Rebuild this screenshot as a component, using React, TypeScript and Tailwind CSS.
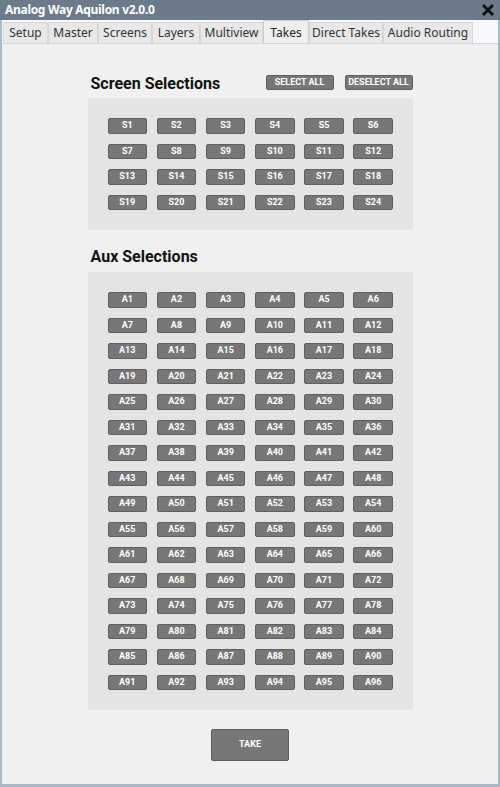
import React from "react";

const tabs = [
  { label: "Setup", w: "w-[45px]" },
  { label: "Master", w: "w-[50px]" },
  { label: "Screens", w: "w-[54px]" },
  { label: "Layers", w: "w-[48px]" },
  { label: "Multiview", w: "w-[63px]" },
  { label: "Takes", w: "w-[46px]", active: true },
  { label: "Direct Takes", w: "w-[74px]" },
  { label: "Audio Routing", w: "w-[90px]" },
];

const screens = Array.from({ length: 24 }, (_, i) => `S${i + 1}`);
const auxes = Array.from({ length: 96 }, (_, i) => `A${i + 1}`);

const SmallButton = ({ label }: { label: string }) => (
  <button className="h-[15.5px] rounded-[2px] border border-[#5e5e5e] bg-[#777777] text-[9px] font-bold leading-none text-white">
    {label}
  </button>
);

const Selection = ({ items }: { items: string[] }) => (
  <div className="bg-[#e4e4e4] px-[20px] py-[20px]">
    <div className="grid grid-cols-[repeat(6,39.5px)] gap-x-[9.7px] gap-y-[10px]">
      {items.map((s) => (
        <SmallButton key={s} label={s} />
      ))}
    </div>
  </div>
);

const CloseIcon = () => (
  <svg width="12" height="12" viewBox="0 0 12 12">
    <path
      d="M2 2 L10 10 M10 2 L2 10"
      stroke="#111"
      strokeWidth="3"
      strokeLinecap="square"
    />
  </svg>
);

export default function App() {
  return (
    <div
      className="flex h-[787px] w-[500px] flex-col bg-[#aab7c4] px-[2px] pb-[3px]"
      style={{ fontFamily: "Roboto, 'Liberation Sans', sans-serif" }}
    >
      {/* title bar */}
      <div className="-mx-[2px] flex h-[20px] items-center justify-between bg-[#6c7b8a] pl-[5px] pr-[6px]">
        <span
          className="text-[12px] font-bold tracking-[-0.3px] text-white"
          style={{ fontFamily: "'Noto Sans', 'Open Sans', sans-serif" }}
        >
          Analog Way Aquilon v2.0.0
        </span>
        <CloseIcon />
      </div>

      {/* tab header */}
      <div
        className="flex h-[23px] items-end bg-[#f6f8fb] pl-[1px]"
        style={{ fontFamily: "'Noto Sans', 'Open Sans', sans-serif" }}
      >
        {tabs.map((t) =>
          t.active ? (
            <div
              key={t.label}
              className={`${t.w} -mb-px flex h-[24px] items-center justify-center border border-b-0 border-[#cfcfcf] bg-[#f0f0f0] text-[12px] text-[#222]`}
            >
              {t.label}
            </div>
          ) : (
            <div
              key={t.label}
              className={`${t.w} flex h-[21px] items-center justify-center border border-b-0 border-[#d6d6d6] bg-[#e8e8e8] text-[12px] text-[#333]`}
            >
              {t.label}
            </div>
          )
        )}
      </div>

      {/* content */}
      <div className="flex flex-1 flex-col items-center border-t border-[#d4d4d4] bg-[#f0f0f0] pt-[28px]">
        <div className="w-[325px]">
          <div className="flex h-[20px] items-center justify-between">
            <h2 className="pl-[3px] pt-[3px] text-[16px] font-bold text-[#111]">
              Screen Selections
            </h2>
            <div className="flex gap-[11px]">
              <button className="h-[15px] w-[68px] rounded-[2px] border border-[#5e5e5e] bg-[#777777] text-[9px] font-bold leading-none text-white">
                SELECT ALL
              </button>
              <button className="h-[15px] w-[68px] rounded-[2px] border border-[#5e5e5e] bg-[#777777] text-[9px] font-bold leading-none text-white">
                DESELECT ALL
              </button>
            </div>
          </div>
          <div className="mt-[6px]">
            <Selection items={screens} />
          </div>

          <div className="mt-[16px] flex h-[20px] items-center">
            <h2 className="pl-[3px] pt-[1px] text-[16px] font-bold text-[#111]">
              Aux Selections
            </h2>
          </div>
          <div className="mt-[6px]">
            <Selection items={auxes} />
          </div>
        </div>

        <button className="mt-[19px] h-[32px] w-[78px] rounded-[2px] border border-[#5e5e5e] bg-[#777777] text-[9px] font-bold text-white">
          TAKE
        </button>
      </div>
    </div>
  );
}
